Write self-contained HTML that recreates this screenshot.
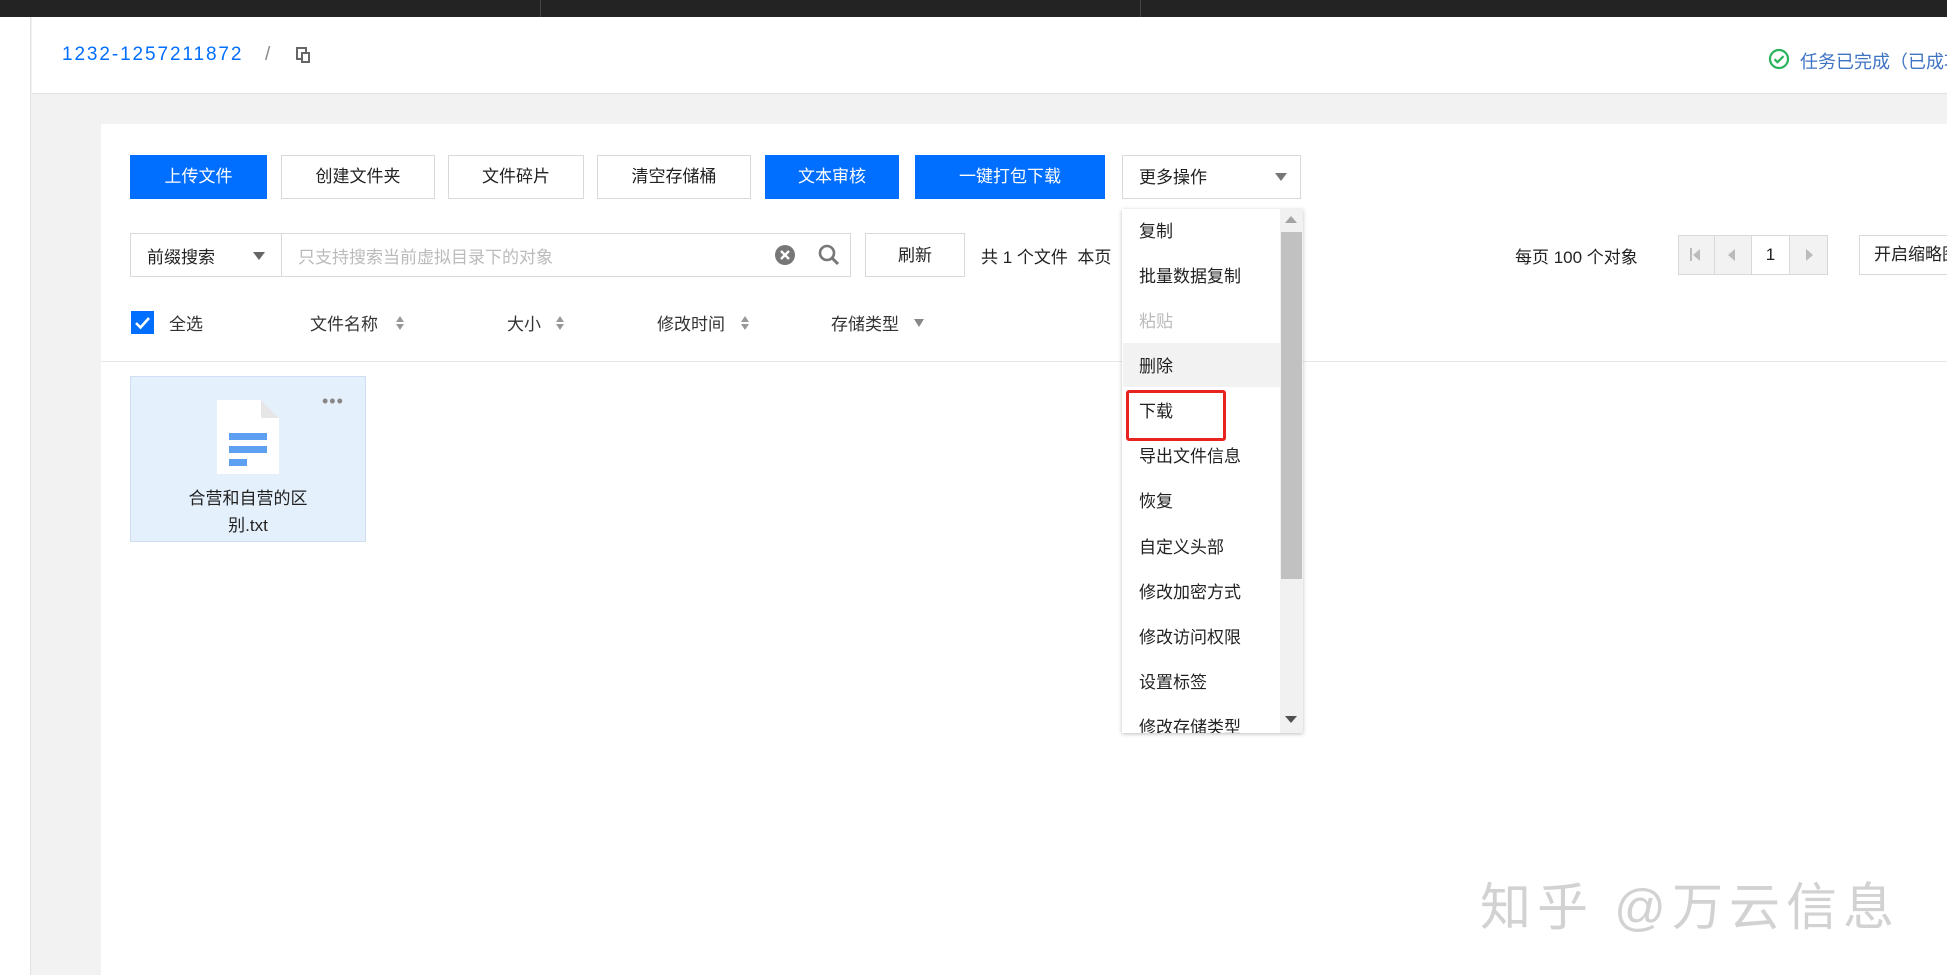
<!DOCTYPE html>
<html><head><meta charset="utf-8"><style>
*{margin:0;padding:0;box-sizing:border-box}
body{width:1947px;height:975px;position:relative;overflow:hidden;background:#f2f2f2;font-family:"Liberation Sans","Noto Sans CJK SC",sans-serif;font-size:17px;color:#222}
.a{position:absolute}
.btn{position:absolute;top:155px;height:44px;line-height:42px;text-align:center;border:1px solid #d9d9d9;background:#fff;color:#222}
.btn.b{background:#006eff;border-color:#006eff;color:#fff}
.mi{position:absolute;left:1139px;font-size:17px;color:#222}
.t{position:absolute;top:310px;font-size:17px;color:#333}
.sort{position:absolute;top:315px;width:8px;height:16px}
</style></head><body>
<div class="a" style="left:0;top:0;width:1947px;height:17px;background:#232323"></div>
<div class="a" style="left:540px;top:0;width:1px;height:17px;background:#444"></div>
<div class="a" style="left:1140px;top:0;width:1px;height:17px;background:#444"></div>
<div class="a" style="left:0;top:17px;width:31px;height:958px;background:#fff;border-right:1px solid #e2e2e2"></div>
<div class="a" style="left:32px;top:17px;width:1915px;height:77px;background:#fff;border-bottom:1px solid #e0e0e0"></div>
<div class="a" style="left:62px;top:44px;font-size:19px;color:#006eff;letter-spacing:1.9px">1232-1257211872</div>
<div class="a" style="left:265px;top:44px;font-size:19px;color:#888">/</div>
<svg class="a" style="left:295px;top:47px" width="18" height="18" viewBox="0 0 18 18"><rect x="2" y="1" width="9" height="11" fill="none" stroke="#666" stroke-width="2"/><rect x="6" y="5" width="9" height="11" fill="#666"/><rect x="8" y="7" width="5" height="7" fill="#fff"/></svg>
<svg class="a" style="left:1768px;top:48px" width="22" height="22" viewBox="0 0 22 22"><circle cx="11" cy="11" r="9" fill="none" stroke="#29b35b" stroke-width="2.2"/><path d="M6.5 11.2l3 3 6-6" fill="none" stroke="#29b35b" stroke-width="2.2"/></svg>
<div class="a" style="left:1800px;top:48px;font-size:18px;color:#3f73c4;white-space:nowrap">任务已完成（已成功</div>

<div class="a" style="left:101px;top:124px;width:1846px;height:851px;background:#fff"></div>

<div class="btn b" style="left:130px;width:137px">上传文件</div>
<div class="btn" style="left:281px;width:154px">创建文件夹</div>
<div class="btn" style="left:448px;width:136px">文件碎片</div>
<div class="btn" style="left:597px;width:154px">清空存储桶</div>
<div class="btn b" style="left:765px;width:134px">文本审核</div>
<div class="btn b" style="left:915px;width:190px">一键打包下载</div>
<div class="btn" style="left:1122px;width:179px;text-align:left;padding-left:16px;line-height:44px">更多操作</div>
<div class="a" style="left:1275px;top:173px;border-left:6px solid transparent;border-right:6px solid transparent;border-top:8px solid #777"></div>

<div class="a" style="left:130px;top:233px;width:721px;height:44px;border:1px solid #d9d9d9"></div>
<div class="a" style="left:281px;top:233px;width:1px;height:44px;background:#d9d9d9"></div>
<div class="a" style="left:147px;top:243px">前缀搜索</div>
<div class="a" style="left:253px;top:252px;border-left:6px solid transparent;border-right:6px solid transparent;border-top:8px solid #666"></div>
<div class="a" style="left:298px;top:243px;color:#bbb">只支持搜索当前虚拟目录下的对象</div>
<svg class="a" style="left:774px;top:244px" width="22" height="22" viewBox="0 0 22 22"><circle cx="11" cy="11" r="10" fill="#777"/><path d="M7 7l8 8M15 7l-8 8" stroke="#fff" stroke-width="2.4"/></svg>
<svg class="a" style="left:817px;top:243px" width="24" height="24" viewBox="0 0 24 24"><circle cx="10" cy="10" r="7" fill="none" stroke="#777" stroke-width="2.6"/><path d="M15 15l6 6" stroke="#777" stroke-width="3"/></svg>
<div class="a" style="left:865px;top:233px;width:100px;height:44px;border:1px solid #d9d9d9;text-align:center;line-height:44px">刷新</div>
<div class="a" style="left:981px;top:243px;white-space:nowrap">共 1 个文件&nbsp;&nbsp;本页</div>
<div class="a" style="left:1515px;top:243px;white-space:nowrap">每页 100 个对象</div>
<div class="a" style="left:1678px;top:235px;width:150px;height:40px;border:1px solid #d9d9d9;background:#f2f2f2"></div>
<div class="a" style="left:1714px;top:235px;width:1px;height:40px;background:#d9d9d9"></div>
<div class="a" style="left:1751px;top:236px;width:39px;height:38px;background:#fff;border-left:1px solid #d9d9d9;border-right:1px solid #d9d9d9;text-align:center;line-height:38px">1</div>
<div class="a" style="left:1690px;top:248px;width:2px;height:13px;background:#bbb"></div>
<div class="a" style="left:1693px;top:249px;border-top:6px solid transparent;border-bottom:6px solid transparent;border-right:7px solid #bbb"></div>
<div class="a" style="left:1728px;top:249px;border-top:6px solid transparent;border-bottom:6px solid transparent;border-right:7px solid #bbb"></div>
<div class="a" style="left:1806px;top:249px;border-top:6px solid transparent;border-bottom:6px solid transparent;border-left:7px solid #bbb"></div>
<div class="a" style="left:1859px;top:235px;width:100px;height:40px;border:1px solid #d9d9d9;padding-left:14px;line-height:38px;white-space:nowrap">开启缩略图</div>

<div class="a" style="left:131px;top:311px;width:23px;height:23px;background:#006eff"></div>
<svg class="a" style="left:131px;top:311px" width="23" height="23"><path d="M5 12l4.5 4.5L18 7" fill="none" stroke="#fff" stroke-width="2.6"/></svg>
<div class="t" style="left:169px">全选</div>
<div class="t" style="left:310px">文件名称</div>
<div class="t" style="left:507px">大小</div>
<div class="t" style="left:657px">修改时间</div>
<div class="t" style="left:831px">存储类型</div>
<svg class="sort" style="left:396px"><path d="M4 1L8 7H0zM4 15L0 9h8z" fill="#999"/></svg>
<svg class="sort" style="left:556px"><path d="M4 1L8 7H0zM4 15L0 9h8z" fill="#999"/></svg>
<svg class="sort" style="left:741px"><path d="M4 1L8 7H0zM4 15L0 9h8z" fill="#999"/></svg>
<div class="a" style="left:914px;top:319px;border-left:5px solid transparent;border-right:5px solid transparent;border-top:8px solid #888"></div>
<div class="a" style="left:101px;top:361px;width:1846px;height:1px;background:#e8e8e8"></div>

<div class="a" style="left:130px;top:376px;width:236px;height:166px;background:#e5f0fd;border:1px solid #cfdff3"></div>
<svg class="a" style="left:215px;top:398px" width="66" height="78" viewBox="0 0 66 78"><path d="M2 2H46L64 20V76H2Z" fill="#fff"/><path d="M46 2V20H64" fill="#e6e6e6"/><rect x="14" y="35" width="38" height="7" fill="#5d9ff0"/><rect x="14" y="48" width="38" height="7" fill="#5d9ff0"/><rect x="14" y="61" width="18" height="7" fill="#5d9ff0"/></svg>
<div class="a" style="left:322px;top:391px;font-size:18px;color:#888;letter-spacing:1px">•••</div>
<div class="a" style="left:130px;top:485px;width:236px;text-align:center;line-height:27px;font-size:17px">合营和自营的区<br>别.txt</div>

<div class="a" style="left:1122px;top:209px;width:181px;height:524px;background:#fff;box-shadow:0 1px 4px rgba(0,0,0,.25)"></div>
<div class="a" style="left:1123px;top:343px;width:157px;height:44px;background:#f2f2f2"></div>
<div class="a" style="left:1280px;top:209px;width:23px;height:524px;background:#f1f1f1"></div>
<div class="a" style="left:1281px;top:232px;width:21px;height:347px;background:#c1c1c1"></div>
<div class="a" style="left:1285px;top:216px;border-left:6px solid transparent;border-right:6px solid transparent;border-bottom:7px solid #a3a3a3"></div>
<div class="a" style="left:1285px;top:716px;border-left:6px solid transparent;border-right:6px solid transparent;border-top:7px solid #505050"></div>
<div class="mi" style="top:217px">复制</div>
<div class="mi" style="top:262px">批量数据复制</div>
<div class="mi" style="top:307px;color:#bbb">粘贴</div>
<div class="mi" style="top:352px">删除</div>
<div class="mi" style="top:397px">下载</div>
<div class="mi" style="top:442px">导出文件信息</div>
<div class="mi" style="top:487px">恢复</div>
<div class="mi" style="top:533px">自定义头部</div>
<div class="mi" style="top:578px">修改加密方式</div>
<div class="mi" style="top:623px">修改访问权限</div>
<div class="mi" style="top:668px">设置标签</div>
<div class="mi" style="top:713px;height:20px;overflow:hidden">修改存储类型</div>
<div class="a" style="left:1126px;top:390px;width:100px;height:51px;border:3px solid #e8241f;border-radius:3px"></div>

<div class="a" style="left:1480px;top:866px;font-size:51px;color:#d2d2d2;white-space:nowrap;letter-spacing:6px">知乎 @万云信息</div>
</body></html>
